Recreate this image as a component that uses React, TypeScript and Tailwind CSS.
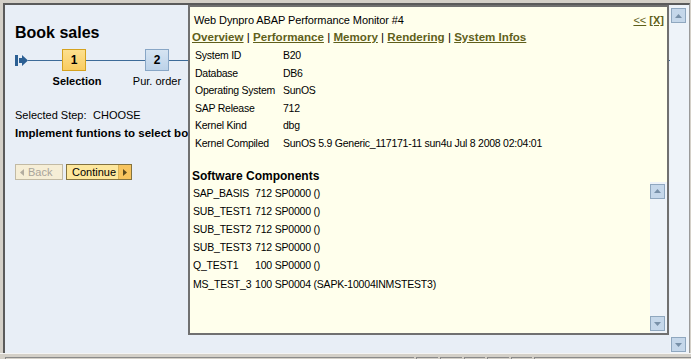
// SAP Web Dynpro "Book sales" roadmap screen with the ABAP Performance Monitor popup over it.

const LINK = "text-[#5f5f1b]";

const SYSTEM_INFO: [string, string][] = [
  ["System ID", "B20"],
  ["Database", "DB6"],
  ["Operating System", "SunOS"],
  ["SAP Release", "712"],
  ["Kernel Kind", "dbg"],
  ["Kernel Compiled", "SunOS 5.9 Generic_117171-11 sun4u Jul 8 2008 02:04:01"],
];

const COMPONENTS: [string, string][] = [
  ["SAP_BASIS", "712 SP0000 ()"],
  ["SUB_TEST1", "712 SP0000 ()"],
  ["SUB_TEST2", "712 SP0000 ()"],
  ["SUB_TEST3", "712 SP0000 ()"],
  ["Q_TEST1", "100 SP0000 ()"],
  ["MS_TEST_3", "100 SP0004 (SAPK-10004INMSTEST3)"],
];

function ScrollBtn({ dir }: { dir: "up" | "down" }) {
  return (
    <div className="flex h-[15px] w-[15px] items-center justify-center border border-[#8fa7bf] bg-[#c5d7ea]">
      <svg width="7" height="4" viewBox="0 0 7 4">
        {dir === "up" ? (
          <path d="M3.5 0 L7 4 L0 4 Z" fill="#7890a8" />
        ) : (
          <path d="M0 0 L7 0 L3.5 4 Z" fill="#7890a8" />
        )}
      </svg>
    </div>
  );
}

function MainContent() {
  return (
    <div className="flex-1 overflow-hidden bg-[#e8eef6] pl-[10px] pt-[19px]">
      <div className="text-[16px] font-bold leading-[18px]">Book sales</div>

      {/* roadmap */}
      <div className="mt-[7px] flex h-[22px] items-center">
        <svg width="13" height="11" viewBox="0 0 13 11" className="shrink-0">
          <rect x="0" y="0" width="3" height="11" fill="#2b5f93" />
          <path d="M4 3 H7 V0 L13 5.5 L7 11 V8 H4 Z" fill="#2b5f93" />
        </svg>
        <div className="h-px w-[34px] bg-[#3d6b98]" />
        <div className="flex h-[22px] w-[24px] shrink-0 items-center justify-center border border-[#d5a21f] bg-gradient-to-b from-[#fde08e] to-[#f9cc60] text-[12px] font-bold">
          1
        </div>
        <div className="h-px w-[59px] bg-[#3d6b98]" />
        <div className="flex h-[22px] w-[24px] shrink-0 items-center justify-center border border-[#88a6c6] bg-gradient-to-b from-[#d6e4f2] to-[#bcd2e9] text-[12px] font-bold">
          2
        </div>
        <div className="h-px flex-1 bg-[#3d6b98]" />
      </div>
      <div className="mt-[4px] flex leading-[13px]">
        <div className="ml-[32px] w-[60px] text-center font-bold">Selection</div>
        <div className="ml-[20px] w-[60px] text-center">Pur. order</div>
      </div>

      <div className="mt-[21px] flex leading-[13px]">
        <span className="w-[78px]">Selected Step:</span>
        <span>CHOOSE</span>
      </div>
      <div className="mt-[4px] whitespace-nowrap text-[11.5px] font-bold leading-[14px]">
        Implement funtions to select books
      </div>

      {/* buttons */}
      <div className="mt-[24px] flex h-[16px] gap-[3px]">
        <div className="flex w-[48px] items-center border border-[#c2baa4] bg-[#f6eed6] text-[#a9a49a]">
          <div className="flex w-[12px] justify-center">
            <svg width="4" height="7" viewBox="0 0 4 7">
              <path d="M4 0 L0 3.5 L4 7 Z" fill="#b3ada0" />
            </svg>
          </div>
          <span className="leading-[14px]">Back</span>
        </div>
        <div className="flex w-[66px] items-center border border-[#84733f] bg-[#fde79d]">
          <span className="flex-1 pl-[5px] leading-[14px]">Continue</span>
          <div className="flex h-full w-[13px] items-center justify-center border-l border-[#d9b35a] bg-[#f7c45e]">
            <svg width="4" height="7" viewBox="0 0 4 7">
              <path d="M0 0 L4 3.5 L0 7 Z" fill="#5b4a1e" />
            </svg>
          </div>
        </div>
      </div>
    </div>
  );
}

function Popup() {
  return (
    <div className="absolute left-[188px] top-[5px] flex h-[330px] w-[481px] flex-col border-2 border-[#707070] bg-[#ffffec]">
      <div className="flex items-start justify-between pl-[4px] pr-[3px] pt-[7px] leading-[13px]">
        <span className="tracking-[-0.1px]">Web Dynpro ABAP Performance Monitor #4</span>
        <span className={LINK}>
          <span className="underline">&lt;&lt;</span>{" "}
          <span className="font-bold underline">[X]</span>
        </span>
      </div>
      <div className={`mt-[3px] whitespace-nowrap pl-[2px] text-[11.6px] font-bold leading-[14px] ${LINK}`}>
        <span className="underline">Overview</span>
        <span className="font-normal text-black"> | </span>
        <span className="underline">Performance</span>
        <span className="font-normal text-black"> | </span>
        <span className="underline">Memory</span>
        <span className="font-normal text-black"> | </span>
        <span className="underline">Rendering</span>
        <span className="font-normal text-black"> | </span>
        <span className="underline">System Infos</span>
      </div>

      <div className="mt-[3px] grid grid-cols-[88px_auto] pl-[5px] text-[10.5px] leading-[17.6px] tracking-[-0.25px]">
        {SYSTEM_INFO.map(([k, v]) => (
          <div key={k} className="contents">
            <div className="h-[17.6px] whitespace-nowrap">{k}</div>
            <div className="h-[17.6px] whitespace-nowrap">{v}</div>
          </div>
        ))}
      </div>

      <div className="mt-[17px] pl-[2px] text-[12px] font-bold leading-[12px]">Software Components</div>

      <div className="flex min-h-0 flex-1">
        <div className="flex-1 pl-[3px] pt-[2px]">
          <div className="grid grid-cols-[62px_auto] text-[10.5px] leading-[18.2px] tracking-[-0.2px]">
            {COMPONENTS.map(([k, v]) => (
              <div key={k} className="contents">
                <div className="h-[18.2px] whitespace-nowrap">{k}</div>
                <div className="h-[18.2px] whitespace-nowrap">{v}</div>
              </div>
            ))}
          </div>
        </div>
        <div className="flex w-[17px] flex-col justify-between bg-[#eef3f9] py-[2px]">
          <ScrollBtn dir="up" />
          <ScrollBtn dir="down" />
        </div>
      </div>
    </div>
  );
}

function StatusBar() {
  const small = [22, 22, 21, 22, 21];
  return (
    <div className="h-[6px] border-t border-[#f4f4f4] pl-[5px] pt-[3px]">
      <div className="flex gap-[2px]">
        <div className="flex h-[10px] w-[409px] border-l border-t border-[#8a8a8a] pl-[3px]">
          <div className="mt-[1px] h-[4px] w-[8px] bg-[#4f7fbf]" />
        </div>
        {small.map((w, i) => (
          <div key={i} className="h-[10px] border-l border-t border-[#8a8a8a]" style={{ width: w }} />
        ))}
        <div className="flex h-[10px] flex-1 border-l border-t border-[#8a8a8a] pl-[3px]">
          <div className="mt-[1px] h-[3px] w-[6px] bg-[#6aa86a]" />
        </div>
      </div>
    </div>
  );
}

export default function App() {
  return (
    <div className="relative h-[359px] w-[691px] overflow-hidden bg-[#d4d0c8] font-['Liberation_Sans',Arial,sans-serif] text-[11px] text-black">
      <div className="ml-[3px] mt-[3px] flex h-[350px] w-[687px] border-l-2 border-r border-t-2 border-[#5a5a5a] border-r-[#9a9a9a]">
        <MainContent />
        <div className="flex w-[19px] flex-col justify-between bg-[#eef3f9] pb-[1px] pl-[1px] pt-[3px]">
          <ScrollBtn dir="up" />
          <ScrollBtn dir="down" />
        </div>
      </div>
      <StatusBar />
      <Popup />
    </div>
  );
}
